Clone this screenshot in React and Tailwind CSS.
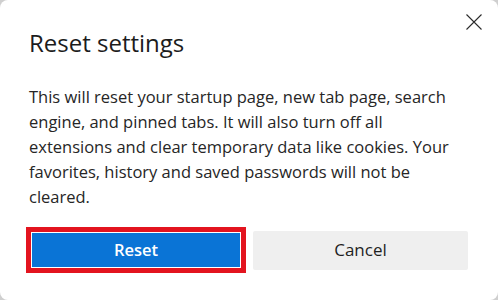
import React from "react";

export default function App() {
  return (
    <div className="w-[498px] h-[300px] bg-[#cfcfcf]" style={{ fontFamily: '"Open Sans", "Noto Sans", sans-serif' }}>
      <div className="relative w-full h-full bg-white rounded-[8px] px-[29px] pt-[27px] flex flex-col">
        <button className="absolute top-[14px] right-[16px] w-[16px] h-[16px] text-[#2b2b2b]" aria-label="Close">
          <svg width="16" height="16" viewBox="0 0 16 16" fill="none" stroke="currentColor" strokeWidth="1.1">
            <path d="M0.5 0.5 L15.5 15.5 M15.5 0.5 L0.5 15.5" />
          </svg>
        </button>
        <h1 className="text-[24px] leading-[32px] text-[#1c1c1c] font-normal">Reset settings</h1>
        <p className="mt-[25px] text-[16.5px] leading-[25px] text-[#262626] whitespace-nowrap">
          This will reset your startup page, new tab page, search<br />
          engine, and pinned tabs. It will also turn off all<br />
          extensions and clear temporary data like cookies. Your<br />
          favorites, history and saved passwords will not be<br />
          cleared.
        </p>
        <div className="mt-[18px] -ml-[3px] flex items-center gap-[7px]">
          <div className="w-[220px] h-[46px] border-[5px] border-[#e3141f] p-[1px] bg-white">
            <button className="w-full h-full bg-[#0a74d6] text-white text-[16.5px] font-semibold">Reset</button>
          </div>
          <button className="w-[215px] h-[39px] bg-[#efefef] text-[#1f1f1f] text-[17px] rounded-[2px]">Cancel</button>
        </div>
      </div>
    </div>
  );
}
